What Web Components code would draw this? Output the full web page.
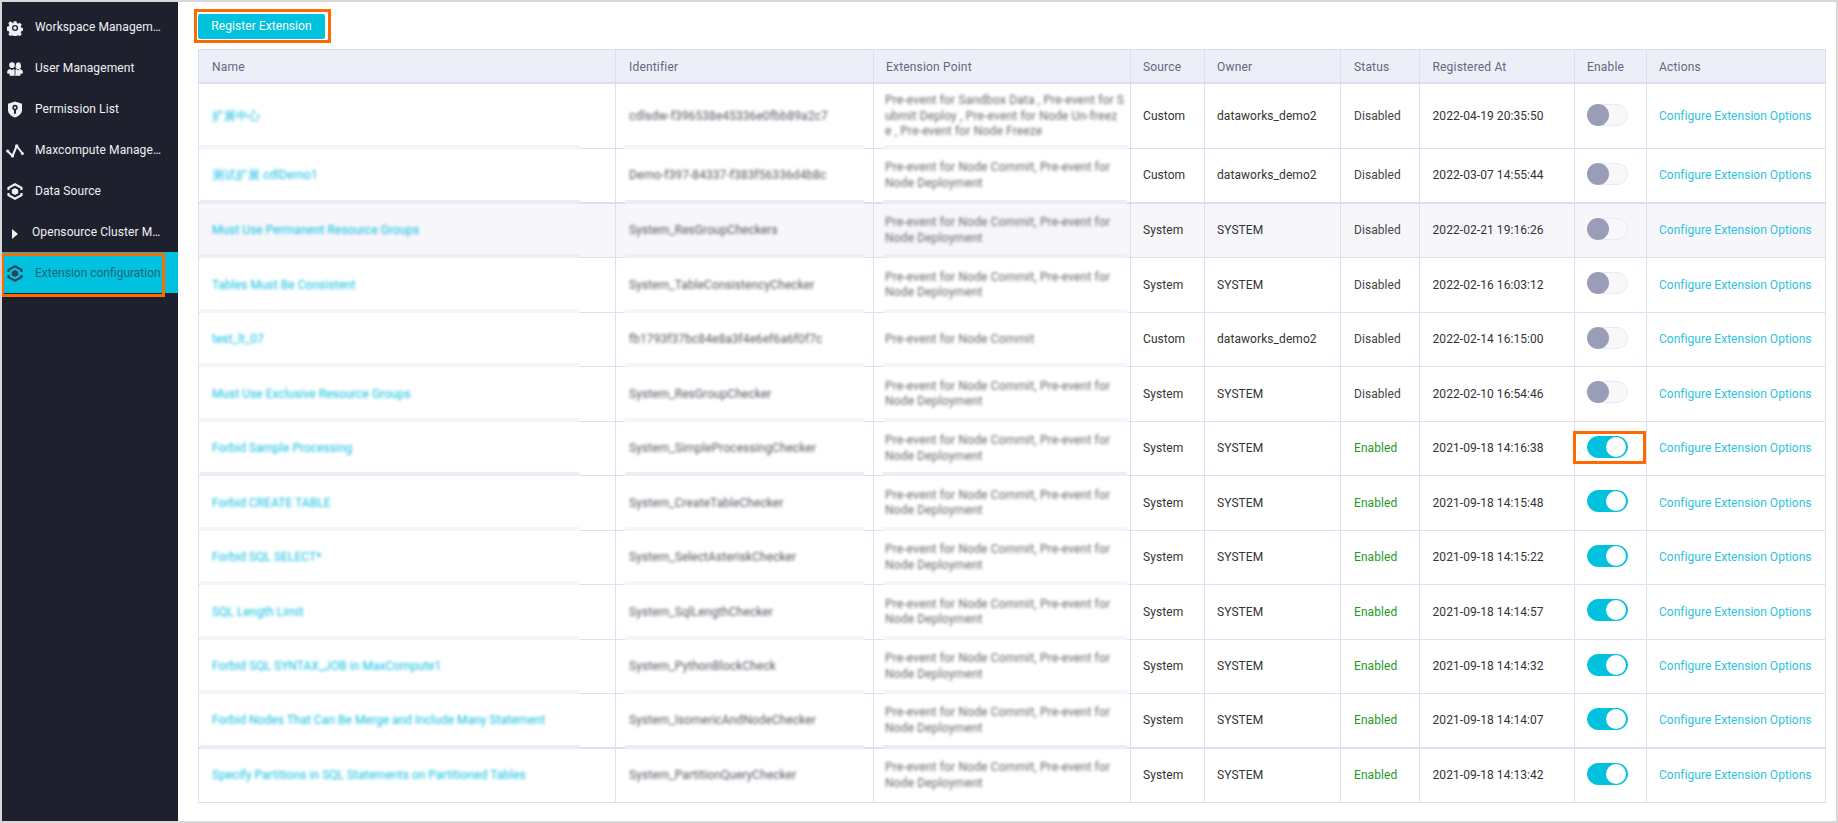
<!DOCTYPE html>
<html lang="en"><head><meta charset="utf-8"><title>Extension configuration</title>
<style>
html,body{margin:0;padding:0;background:#fff;font-family:Roboto,"Noto Sans CJK SC",sans-serif;font-size:12px}
</style></head>
<body>
<app-shell>
  <side-nav slot="nav">
    <nav-item icon="gear">Workspace Management</nav-item>
    <nav-item icon="users">User Management</nav-item>
    <nav-item icon="shield">Permission List</nav-item>
    <nav-item icon="chart">Maxcompute Management</nav-item>
    <nav-item icon="hex">Data Source</nav-item>
    <nav-item icon="tri" sub>Opensource Cluster Management</nav-item>
    <nav-item icon="hex" active marked>Extension configuration</nav-item>
  </side-nav>
  <primary-button>Register Extension</primary-button>
  <ext-table></ext-table>
</app-shell>
<script>
const ICONS={
gear:`<svg width="16" height="16" viewBox="0 0 16 16"><path fill="currentColor" fill-rule="evenodd" d="M6.5.6h3l.4 2 1.5.7 1.8-1 2 2.1-1.1 1.7.6 1.5 2 .5v2.8l-2 .5-.6 1.5 1.1 1.7-2 2.1-1.8-1-1.5.7-.4 2h-3l-.4-2-1.5-.7-1.8 1-2-2.1 1.1-1.7-.6-1.5-2-.5V6.600l2-.5.6-1.5L.7 2.900l2-2.100 1.800 1L6 3.100zM8 4.700a3.300 3.300 0 1 0 0 6.600 3.300 3.300 0 0 0 0-6.600z" transform="translate(.6 .6) scale(.93)"/><circle cx="8" cy="8" r="1.700" fill="currentColor"/></svg>`,
users:`<svg width="16" height="16" viewBox="0 0 16 16"><g fill="currentColor"><path d="M5 1.200a2.800 2.800 0 0 1 2.800 3 2.800 2.800 0 1 1-5.600 0A2.800 2.800 0 0 1 5 1.200z"/><path d="M11 1.200a2.800 2.800 0 0 1 2.800 3 2.800 2.800 0 1 1-5 0A2.800 2.800 0 0 1 11 1.200z"/><path d="M.2 12.400v-1.600c0-1.500 1.500-2.500 3-2.800L5 9.200 6.600 8l1.400 1 1.400-1L11 9.200 12.800 8c1.500.3 3 1.300 3 2.800v1.600l-2.400.3V14.800H2.600V12.700z"/></g><path d="M8 8.800v5.600" stroke="#1e202d" stroke-width=".8" fill="none"/></svg>`,
shield:`<svg width="16" height="17" viewBox="0 0 16 17"><path fill="currentColor" fill-rule="evenodd" d="M8 .4l7 2.400v6c0 3.800-3 6.500-7 7.800-4-1.300-7-4-7-7.800v-6zM8 3.800a2.800 2.800 0 0 0-1 5.400v3.600h2V9.200a2.800 2.800 0 0 0-1-5.400zM8 5.400a1.200 1.200 0 1 1 0 2.400 1.200 1.200 0 0 1 0-2.400z"/></svg>`,
chart:`<svg width="18" height="14" viewBox="0 0 18 14"><path fill="none" stroke="currentColor" stroke-width="2" stroke-linejoin="round" d="M1.500 7l5 5L10.700 2l5.800 7.500"/><g fill="currentColor"><circle cx="1.600" cy="7" r="1.500"/><circle cx="6.500" cy="12" r="1.600"/><circle cx="10.700" cy="2" r="1.700"/><circle cx="16.400" cy="9.400" r="1.500"/></g></svg>`,
hex:`<svg width="16" height="17" viewBox="0 0 16 17"><path fill="none" stroke="currentColor" stroke-width="2.200" d="M1.500 7V4.900L8 1.300l6.500 3.600V7M1.500 10v2.100L8 15.700l6.500-3.600V10"/><path fill="currentColor" d="M8 4.900l3.200 1.800v3.600L8 12.100l-3.200-1.800V6.700z"/></svg>`,
tri:`<svg width="6" height="10" viewBox="0 0 6 10"><path fill="currentColor" d="M0 0l6 5-6 5z"/></svg>`
};
function def(name,css,html,extra){
  customElements.define(name,class extends HTMLElement{
    constructor(){super();this.attachShadow({mode:'open'}).innerHTML=`<style>${css}</style>${typeof html==='function'?html(this):html}`;}
    connectedCallback(){if(extra)extra(this)}
  });
}
def('app-shell',`:host{display:flex;box-sizing:border-box;width:1838px;height:823px;border:2px solid #d8d8d8;background:#fff;overflow:hidden}
main{flex:1;min-width:0;padding:12px 0 0 20px;display:flex;flex-direction:column;align-items:flex-start;gap:10px}
::slotted(side-nav){flex:none}`,`<slot name="nav"></slot><main><slot></slot></main>`);
def('side-nav',`:host{display:block;width:176px;height:100%;background:#1e202d;padding-top:4px;box-sizing:border-box}`,`<slot></slot>`);
def('nav-item',`:host{display:flex;align-items:center;position:relative;height:41px;color:#eef0f4;font:12px/16px Roboto,sans-serif;letter-spacing:.09px;box-sizing:border-box}
.ic{flex:none;width:33px;display:flex;justify-content:center;align-items:center;position:relative;top:1px;box-sizing:border-box;padding-right:7px}
:host([sub]) .ic{width:30px;padding-right:5px;top:2px}
.t{width:127px;white-space:nowrap;overflow:hidden;text-overflow:ellipsis}
:host([sub]) .t{width:131px}
:host([active]){background:#00c1de;color:#1c6678;letter-spacing:0}
:host([active]) .t{width:134px}
:host([active]) .ic{color:#2a4656}
.mark{display:none;position:absolute;left:-1px;top:1px;width:164px;height:44px;box-sizing:border-box;border:3px solid #ff6a00}
:host([marked]) .mark{display:block}`,
el=>`<span class="ic">${ICONS[el.getAttribute('icon')]}</span><span class="t"><slot></slot></span><i class="mark"></i>`);
def('primary-button',`:host{display:block;position:relative;width:127px;height:25px;background:#00c1de;border-radius:2px;color:#fff;font:12px/25px Roboto,sans-serif;letter-spacing:.06px;text-align:center}
i{position:absolute;left:-4px;top:-5px;width:137px;height:34px;box-sizing:border-box;border:3px solid #ff6a00}`,`<slot></slot><i></i>`);
def('ext-row',`:host{display:grid;grid-template-columns:417px 258px 257px 74px 136px 79px 155px 72px 179px;height:54.5px;background:var(--bg,#fff)}
:host([head]){height:34px;background:#eceff8;color:#66667e}
:host([first]){height:65px}`,`<slot></slot>`);
def('ext-cell',`:host{display:flex;align-items:center;position:relative;box-sizing:border-box;padding:var(--pt,1px) 8px 0 var(--pad,12px);border-right:1px solid #dcdff0;border-bottom:var(--line,1px) solid #dcdff0;min-width:0;font:12px/15.500px Roboto,sans-serif;letter-spacing:var(--ls,.07px)}
.strip{display:none;position:absolute;height:4px;bottom:calc(-1 * var(--line,1px));left:var(--sl,1px);right:var(--sr,35px);background:var(--strip,#f5f5fa)}
:host([blurred]) .strip{display:var(--stripshow,block)}
.b{display:block}
:host([blurred]) .b{filter:blur(var(--bl,1.800px))}`,`<span class="b"><slot></slot></span><i class="strip"></i>`);
def('ext-toggle',`:host{display:block;position:relative;width:41px;height:22px;top:-2px;box-sizing:border-box;border-radius:11px;background:#f8f8fb;border:1px solid #eaeaf3}
b{position:absolute;left:-1px;top:-1px;width:22px;height:22px;border-radius:50%;background:#9a9db8}
:host([on]){background:#00c1de;border-color:#00c1de}
:host([on]) b{left:18px;top:0;width:20px;height:20px;background:#fff}
.mark{display:none;position:absolute;left:-15px;top:-6px;width:73px;height:33px;box-sizing:border-box;border:3px solid #ff6a00}
:host([marked]) .mark{display:block}`,`<b></b><i class="mark"></i>`);
const A='Pre-event for Node Commit, Pre-event for<br>Node Deployment',
R1='Pre-event for Sandbox Data , Pre-event for S<br>ubmit Deploy , Pre-event for Node Un-freez<br>e , Pre-event for Node Freeze',
C='Pre-event for Node Commit';
const D='dataworks_demo2',S='SYSTEM';
const rows=[
['扩展中心','cdlsdw-f396538e45336e0fbb89a2c7','Custom',D,0,'2022-04-19 20:35:50',R1],
['测试扩展 cdlDemo1','Demo-f397-84337-f383f56336d4b8c','Custom',D,0,'2022-03-07 14:55:44',A],
['Must Use Permanent Resource Groups','System_ResGroupCheckers','System',S,0,'2022-02-21 19:16:26',A],
['Tables Must Be Consistent','System_TableConsistencyChecker','System',S,0,'2022-02-16 16:03:12',A],
['test_lt_07','fb1793f37bc84e8a3f4e6ef6a6f0f7c','Custom',D,0,'2022-02-14 16:15:00',C],
['Must Use Exclusive Resource Groups','System_ResGroupChecker','System',S,0,'2022-02-10 16:54:46',A],
['Forbid Sample Processing','System_SimpleProcessingChecker','System',S,1,'2021-09-18 14:16:38',A],
['Forbid CREATE TABLE','System_CreateTableChecker','System',S,1,'2021-09-18 14:15:48',A],
['Forbid SQL SELECT*','System_SelectAsteriskChecker','System',S,1,'2021-09-18 14:15:22',A],
['SQL Length Limit','System_SqlLengthChecker','System',S,1,'2021-09-18 14:14:57',A],
['Forbid SQL SYNTAX_JOB in MaxCompute1','System_PythonBlockCheck','System',S,1,'2021-09-18 14:14:32',A],
['Forbid Nodes That Can Be Merge and Include Many Statement','System_IsomericAndNodeChecker','System',S,1,'2021-09-18 14:14:07',A],
['Specify Partitions in SQL Statements on Partitioned Tables','System_PartitionQueryChecker','System',S,1,'2021-09-18 14:13:42',A]];
const strips={0:'#f3f3f9',1:'#e9ecf6',2:'#eeeef7',6:'#eeeef7',11:'#e9ecf6'};
def('ext-table',`:host{display:block;box-sizing:border-box;width:1628px;border-left:1px solid #dcdff0;border-top:1px solid #dcdff0}
a{color:#2ec3dd;text-decoration:none;white-space:nowrap;letter-spacing:.03px}
a.n{color:#13bfe0}
.on{color:#1f9a1f}.off{color:#444}
.d{color:#333;white-space:nowrap}
.i{color:#5a5462;white-space:nowrap}
.x{color:#6a6470;white-space:nowrap;letter-spacing:.16px}
ext-row[head] ext-cell{--line:2px;--ls:.18px;--pt:4px}
ext-row:not([head]) ext-cell{color:#333}
`,()=>{
 const head=['Name','Identifier','Extension Point','Source','Owner','Status','Registered At','Enable','Actions'];
 const pads=[13,13,12,12,12,13,12.5,12,12];
 let h=`<ext-row head>${head.map((t,i)=>`<ext-cell style="--pad:${pads[i]}px">${t}</ext-cell>`).join('')}</ext-row>`;
 rows.forEach((r,i)=>{
  const strong=strips[i]||'#f6f6fa';
  const st=(i==1||i==11)?'--line:2px;':'';
  const last=i==12?'--stripshow:none;':'';
  h+=`<ext-row ${i==0?'first':''} style="${i==2?'--bg:#f7f7fb;':''}--strip:${strong};${st}${last}">
  <ext-cell blurred style="--pad:13px;--sr:35px"><a class="n">${r[0]}</a></ext-cell>
  <ext-cell blurred style="--pad:13px;--sl:9px;--sr:9px"><span class="i">${r[1]}</span></ext-cell>
  <ext-cell blurred style="--pad:11px;--sl:9px;--sr:3px"><span class="x">${r[6]}</span></ext-cell>
  <ext-cell>${r[2]}</ext-cell><ext-cell>${r[3]}</ext-cell>
  <ext-cell style="--pad:13px"><span class="${r[4]?'on':'off'}">${r[4]?'Enabled':'Disabled'}</span></ext-cell>
  <ext-cell style="--pad:12.5px"><span class="d">${r[5]}</span></ext-cell>
  <ext-cell><ext-toggle ${r[4]?'on':''} ${i==6?'marked':''}></ext-toggle></ext-cell>
  <ext-cell><a>Configure Extension Options</a></ext-cell>
  </ext-row>`;
 });
 return h;
});
</script>
</body></html>
